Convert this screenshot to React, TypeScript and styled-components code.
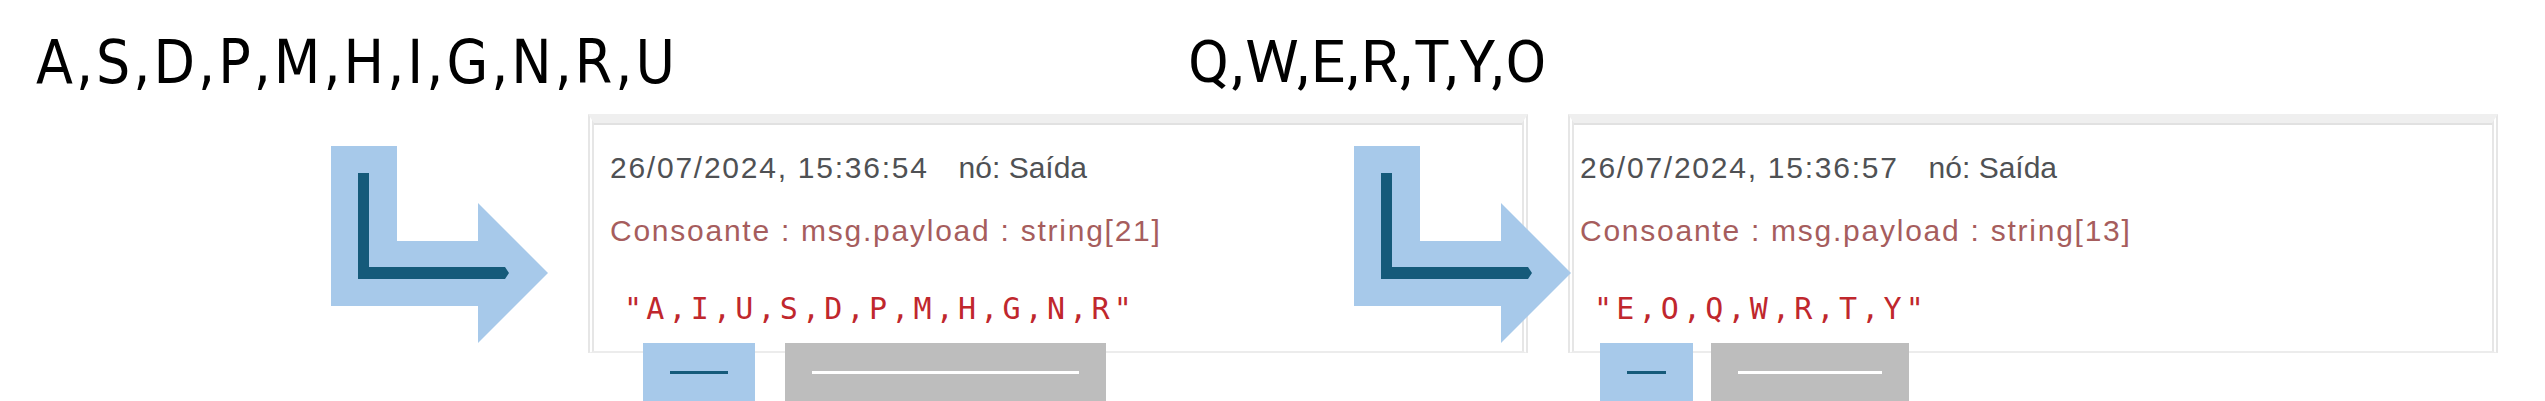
import styled, { createGlobalStyle } from 'styled-components';

const GlobalStyle = createGlobalStyle`
  html, body {
    margin:0;
    padding:0;
    background:#fff;
    overflow:hidden;
  }
  body {
    font-family: "Liberation Sans", Arial, sans-serif;
  }
`;

type Step = {
  input: string,
  time: string,
  node: string,
  topic: string,
  payload: string,
};

const steps: Step[] = [
  {
    input: 'A,S,D,P,M,H,I,G,N,R,U',
    time: '26/07/2024, 15:36:54',
    node: 'nó: Saída',
    topic: 'Consoante : msg.payload : string[21]',
    payload: '"A,I,U,S,D,P,M,H,G,N,R"',
  },
  {
    input: 'Q,W,E,R,T,Y,O',
    time: '26/07/2024, 15:36:57',
    node: 'nó: Saída',
    topic: 'Consoante : msg.payload : string[13]',
    payload: '"E,O,Q,W,R,T,Y"',
  },
];

function TurnArrow({ shift }: { shift: number }) {
  return (
    <ArrowMark $shift={shift} width="217" height="197" viewBox="0 0 217 197">
      <polygon
        points="0,0 66,0 66,95 147,95 147,57 217,127 147,197 147,160 0,160"
        fill="#a7c9ea"
      />
      <polygon
        points="27,27 38,27 38,121 174,121 178,127 174,133 27,133"
        fill="#155a7a"
      />
    </ArrowMark>
  );
}

export default function App() {
  return (
    <Page>
      <GlobalStyle />
      <HeadingRow>
        <Heading $narrow>{steps[0].input}</Heading>
        <Heading>{steps[1].input}</Heading>
      </HeadingRow>
      <FlowRow>
        <TurnArrow shift={0} />
        <CardColumn $shift={40} $width={940}>
          <DebugCard $inset={16}>
            <MetaLine>
              <span>{steps[0].time}</span>
              <NodeName>{steps[0].node}</NodeName>
            </MetaLine>
            <TopicLine>{steps[0].topic}</TopicLine>
            <Payload>{steps[0].payload}</Payload>
          </DebugCard>
          <ButtonRow $inset={55} $gap={30}>
            <ToolButton $tone="blue" $width={112}><Dash $tone="blue" /></ToolButton>
            <ToolButton $tone="gray" $width={321}><Dash $tone="gray" /></ToolButton>
          </ButtonRow>
        </CardColumn>
        <TurnArrow shift={-174} />
        <CardColumn $shift={-3} $width={930}>
          <DebugCard $inset={6}>
            <MetaLine>
              <span>{steps[1].time}</span>
              <NodeName>{steps[1].node}</NodeName>
            </MetaLine>
            <TopicLine>{steps[1].topic}</TopicLine>
            <Payload>{steps[1].payload}</Payload>
          </DebugCard>
          <ButtonRow $inset={32} $gap={18}>
            <ToolButton $tone="blue" $width={93}><Dash $tone="blue" /></ToolButton>
            <ToolButton $tone="gray" $width={198}><Dash $tone="gray" /></ToolButton>
          </ButtonRow>
        </CardColumn>
      </FlowRow>
    </Page>
  );
}

const Page = styled.div`
  width:2545px;
  height:401px;
  display:flex;
  flex-direction:column;
  overflow:hidden;
  background:#fff;
`;

const HeadingRow = styled.div`
  display:grid;
  grid-template-columns: 1152px auto;
  padding:32px 0 0 36px;
`;

const Heading = styled.div<{ $narrow?: boolean }>`
  font-family: ${(p) => (p.$narrow ? '"DejaVu Sans Condensed", "DejaVu Sans", sans-serif' : 'Roboto, "Liberation Sans", sans-serif')};
  font-stretch: ${(p) => (p.$narrow ? 'condensed' : 'normal')};
  font-size:60px;
  line-height:60px;
  letter-spacing: ${(p) => (p.$narrow ? '3px' : '2.1px')};
  color:#000;
  white-space:nowrap;
`;

const FlowRow = styled.div`
  display:flex;
  align-items:flex-start;
  margin-top:22px;
  padding-left:331px;
`;

const ArrowMark = styled.svg<{ $shift: number }>`
  flex:none;
  display:block;
  margin-top:32px;
  margin-left:${(p) => p.$shift}px;
  position:relative;
  z-index:2;
`;

const CardColumn = styled.div<{ $shift: number, $width: number }>`
  flex:none;
  width:${(p) => p.$width}px;
  margin-left:${(p) => p.$shift}px;
  display:flex;
  flex-direction:column;
`;

const DebugCard = styled.div<{ $inset: number }>`
  box-sizing:border-box;
  height:239px;
  border-top:9px solid #efefef;
  border-left:6px double #e6e6e6;
  border-right:6px double #e6e6e6;
  border-bottom:2px solid #ececec;
  box-shadow: inset 0 2px 0 #e1e1e1;
  padding:28px 0 0 ${(p) => p.$inset}px;
  background:#fff;
  font-family: "Liberation Sans", Arial, sans-serif;
  font-size:30px;
  line-height:34px;
  letter-spacing:1.75px;
`;

const MetaLine = styled.div`
  display:flex;
  gap:30px;
  color:#4f5154;
  white-space:nowrap;
`;

const NodeName = styled.span`
  letter-spacing:0;
`;

const TopicLine = styled.div`
  margin-top:29px;
  color:#a65d5d;
  white-space:nowrap;
`;

const Payload = styled.div`
  margin-top:43px;
  padding-left:14px;
  font-family: "DejaVu Sans Mono", "Liberation Mono", monospace;
  font-size:30px;
  line-height:36px;
  letter-spacing:4.2px;
  color:#c0272d;
  white-space:nowrap;
`;

const ButtonRow = styled.div<{ $inset: number, $gap: number }>`
  display:flex;
  gap:${(p) => p.$gap}px;
  margin-top:-10px;
  padding-left:${(p) => p.$inset}px;
  position:relative;
  z-index:1;
`;

const ToolButton = styled.div<{ $tone: 'blue' | 'gray', $width: number }>`
  box-sizing:border-box;
  width:${(p) => p.$width}px;
  height:58px;
  padding:28px 27px 0;
  background:${(p) => (p.$tone === 'blue' ? '#a7c9ea' : '#bdbdbd')};
`;

const Dash = styled.div<{ $tone: 'blue' | 'gray' }>`
  height:3px;
  background:${(p) => (p.$tone === 'blue' ? '#155a7a' : '#ffffff')};
`;
